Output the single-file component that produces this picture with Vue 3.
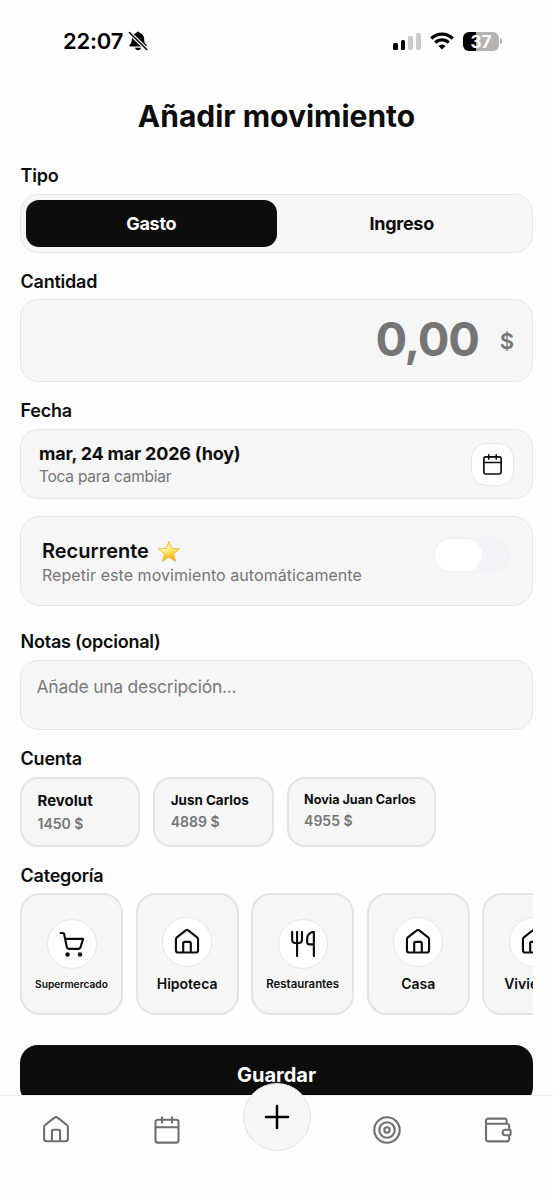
<script setup>
import { ref } from 'vue'

const tipo = ref('Gasto')
const tipos = ['Gasto', 'Ingreso']
const cuentas = [
  { nombre: 'Revolut', saldo: '1450 $', size: 'lg' },
  { nombre: 'Jusn Carlos', saldo: '4889 $', size: 'md' },
  { nombre: 'Novia Juan Carlos', saldo: '4955 $', size: 'sm' },
]
const categorias = [
  { nombre: 'Supermercado', icon: 'cart', size: 'xs' },
  { nombre: 'Hipoteca', icon: 'home', size: 'lg' },
  { nombre: 'Restaurantes', icon: 'food', size: 'sm' },
  { nombre: 'Casa', icon: 'home', size: 'lg' },
  { nombre: 'Vivienda', icon: 'home', size: 'lg' },
]
const HOME =
  'M4.600 25.300H23.400a2.500 2.500 0 0 0 2.500-2.500V11a2.500 2.500 0 0 0-.95-1.950L15.600 1.700a2.500 2.500 0 0 0-3.200 0L3.050 9.050A2.500 2.500 0 0 0 2.100 11V22.800A2.500 2.500 0 0 0 4.600 25.300ZM9.900 25V15.400A1.600 1.600 0 0 1 11.500 13.800h5a1.600 1.600 0 0 1 1.600 1.600V25'
const CALENDAR =
  'M4.700 3.800h18.600a2.200 2.200 0 0 1 2.200 2.200v18.400a2.200 2.200 0 0 1-2.200 2.200H4.700a2.200 2.200 0 0 1-2.200-2.200V6a2.200 2.200 0 0 1 2.200-2.200ZM2.500 11.300h23M9 1.200v5.600M19 1.200v5.600'
const icons = {
  home: HOME,
  cart: 'M1.800 2.200h2.300a1.400 1.400 0 0 1 1.400 1.100L8.500 17.600a2.200 2.200 0 0 0 2.100 1.700h10.400a2.200 2.200 0 0 0 2.100-1.700L26 8.500H6.700',
  food: 'M2.300 1v8.700a3.200 3.200 0 0 0 3.200 3.200h4.200a3.200 3.200 0 0 0 3.200-3.200V1M7.600 1V27M25.700 14.400h-5a2.200 2.200 0 0 1-2.200-2.200V8.200c0-3.800 2.800-7.200 7.200-7.200V27',
}
</script>

<template>
  <div class="screen">
    <div class="scroll">
      <header class="status">
        <div class="clock">
          <span>22:07</span>
          <svg width="20" height="20" viewBox="0 0 20 20">
            <path d="M10 .8c.9 0 1.500.5 1.700 1.200 2.800.7 4.400 2.800 4.400 5.600 0 3.500.8 4.900 2.200 6.100.7.700.5 1.700-.6 1.700H2.300c-1.100 0-1.300-1-.6-1.700 1.400-1.200 2.200-2.600 2.200-6.100 0-2.800 1.600-4.900 4.400-5.600C8.500 1.300 9.100.8 10 .8ZM7 16.800h6c-.3 1.500-1.400 2.500-3 2.500s-2.700-1-3-2.500Z" fill="#000" />
            <path d="M1 1.200 19 18.800" stroke="#fefefe" stroke-width="3.800" />
            <path d="M1.400 1.500 18.700 18.500" stroke="#000" stroke-width="1.500" stroke-linecap="round" />
          </svg>
        </div>
        <div class="signals">
          <div class="bars"><i class="b1" /><i class="b2" /><i class="b3" /><i class="b4" /></div>
          <svg class="wifi" width="24" height="18" viewBox="0 0 24 18">
            <g fill="none" stroke="#000" stroke-width="3.200">
              <path d="M1.300 6.500a15.200 15.200 0 0 1 21.400 0" />
              <path d="M5.300 10.700a9.500 9.500 0 0 1 13.400 0" />
            </g>
            <path d="M12 17.600 8.300 13.900a5.300 5.300 0 0 1 7.400 0Z" fill="#000" />
          </svg>
          <div class="battery"><span>37</span></div>
          <div class="nub" />
        </div>
      </header>

      <h1>Añadir movimiento</h1>

      <main>
        <h2>Tipo</h2>
        <div class="box segment">
          <button v-for="t in tipos" :key="t" :class="{ on: t === tipo }" @click="tipo = t">{{ t }}</button>
        </div>

        <h2 class="short">Cantidad</h2>
        <div class="box amount"><span class="num">0,00</span><span class="cur">$</span></div>

        <h2>Fecha</h2>
        <div class="box date">
          <div>
            <div class="date-main">mar, 24 mar 2026 (hoy)</div>
            <div class="date-sub">Toca para cambiar</div>
          </div>
          <div class="date-btn">
            <svg width="21" height="21" viewBox="0 0 28 28" class="ico thick"><path :d="CALENDAR" /></svg>
          </div>
        </div>

        <div class="box recur">
          <div>
            <div class="recur-main">
              <span>Recurrente</span>
              <svg width="24" height="23" viewBox="0 0 24 23">
                <defs>
                  <linearGradient id="star" x1="0" y1="0" x2="0.300" y2="1">
                    <stop offset="0" stop-color="#fbd85a" />
                    <stop offset="0.450" stop-color="#fdf3a0" />
                    <stop offset="0.650" stop-color="#fbdc55" />
                    <stop offset="1" stop-color="#f3ab1c" />
                  </linearGradient>
                </defs>
                <path d="M12 1.200 14.900 8.300 22.600 8.900 16.700 13.800 18.600 21.300 12 17.200 5.400 21.300 7.300 13.800 1.400 8.900 9.100 8.300Z" fill="url(#star)" stroke="#efb73c" stroke-width="0.900" stroke-linejoin="round" />
              </svg>
            </div>
            <div class="recur-sub">Repetir este movimiento automáticamente</div>
          </div>
          <div class="toggle"><i /></div>
        </div>

        <h2 class="tall">Notas (opcional)</h2>
        <div class="box notes">Añade una descripción...</div>

        <h2>Cuenta</h2>
        <div class="accounts">
          <div v-for="c in cuentas" :key="c.nombre" class="account" :class="c.size">
            <div class="acc-name">{{ c.nombre }}</div>
            <div class="acc-bal">{{ c.saldo }}</div>
          </div>
        </div>

        <h2 class="short cat-title">Categoría</h2>
        <div class="cats">
          <div v-for="c in categorias" :key="c.nombre" class="cat" :class="c.size">
            <div class="circle">
              <svg width="26" height="26" viewBox="0 0 28 28" class="ico dark">
                <path :d="icons[c.icon]" />
                <g v-if="c.icon === 'cart'" class="wheels">
                  <circle cx="9.200" cy="25.200" r="2.400" /><circle cx="22.600" cy="25.200" r="2.400" />
                </g>
              </svg>
            </div>
            <div class="cat-name">{{ c.nombre }}</div>
          </div>
        </div>

        <button class="save">Guardar</button>
      </main>
    </div>

    <nav>
      <div class="tab"><svg width="28" height="28" viewBox="0 0 28 28" class="ico"><path :d="HOME" /></svg></div>
      <div class="tab"><svg width="28" height="28" viewBox="0 0 28 28" class="ico"><path :d="CALENDAR" /></svg></div>
      <div class="tab">
        <div class="fab">
          <svg width="26" height="26" viewBox="0 0 26 26"><path d="M13 2v22M2 13h22" stroke="#000" stroke-width="2.500" stroke-linecap="round" /></svg>
        </div>
      </div>
      <div class="tab">
        <svg width="28" height="28" viewBox="0 0 28 28" class="ico">
          <circle cx="14" cy="14" r="12.700" /><circle cx="14" cy="14" r="7.700" /><circle cx="14" cy="14" r="2.700" />
        </svg>
      </div>
      <div class="tab">
        <svg width="28" height="28" viewBox="0 0 28 28" class="ico">
          <path d="M22.600 7.800V4.300a1.700 1.700 0 0 0-1.700-1.700H4.200A2.200 2.200 0 0 0 2 4.800V23.200a2.200 2.200 0 0 0 2.200 2.200H23a2.200 2.200 0 0 0 2.200-2.200v-4M25.200 13.800V9.900A2.100 2.100 0 0 0 23.100 7.800H2M21.300 13.800h4.300a1 1 0 0 1 1 1v3.400a1 1 0 0 1-1 1h-4.300a2.700 2.700 0 0 1 0-5.400Z" />
        </svg>
      </div>
    </nav>
  </div>
</template>

<style>
body {
  background: #fff;
}
</style>

<style scoped>
.screen {
  width: 553px;
  height: 1200px;
  overflow: hidden;
  display: flex;
  flex-direction: column;
  background: #fefefe;
  color: #0d0d0d;
  font-family: Inter, 'Liberation Sans', sans-serif;
}
.screen * {
  box-sizing: border-box;
}
button {
  font-family: inherit;
  border: 0;
  padding: 0;
  color: inherit;
}
.scroll {
  height: 1095px;
  flex: none;
  overflow: hidden;
}
.status {
  height: 82px;
  padding: 0 51px 0 63px;
  display: flex;
  align-items: center;
  justify-content: space-between;
}
.clock {
  display: flex;
  align-items: center;
  gap: 5px;
  font-size: 22px;
  font-weight: 600;
  letter-spacing: -0.2px;
  color: #000;
}
.signals {
  display: flex;
  align-items: center;
}
.bars {
  display: flex;
  align-items: flex-end;
  gap: 3px;
  height: 17px;
  margin-right: 9px;
}
.bars i {
  width: 4.800px;
  border-radius: 1.500px;
  background: #000;
}
.bars .b1 { height: 7px; }
.bars .b2 { height: 10px; }
.bars .b3 { height: 13.500px; background: #ccc; }
.bars .b4 { height: 17px; background: #ccc; }
.battery {
  margin-left: 9px;
  width: 36px;
  height: 19px;
  border-radius: 6px;
  background: linear-gradient(90deg, #000 37%, #b3b3b3 37%);
  color: #fff;
  font-size: 17px;
  font-weight: 700;
  line-height: 20px;
  text-align: center;
}
.nub {
  width: 2px;
  height: 6px;
  margin-left: 1px;
  border-radius: 0 2px 2px 0;
  background: #b3b3b3;
}
h1 {
  margin: 0;
  height: 70px;
  line-height: 69px;
  text-align: center;
  font-size: 30px;
  font-weight: 700;
}
main {
  padding: 0 20px;
}
h2 {
  margin: 0;
  height: 47px;
  padding: 17px 0 0 0.600px;
  font-size: 18px;
  line-height: 24px;
  letter-spacing: -0.24px;
  font-weight: 600;
}
h1 + main > h2:first-child {
  height: 42px;
  padding-top: 12px;
}
h2.tall {
  height: 54px;
  padding-top: 24px;
}
h2.short {
  height: 46px;
}
.box {
  border: 1.500px solid #e6e6e6;
  border-radius: 18px;
  background: #f6f6f6;
}
.segment {
  height: 59px;
  padding: 5px;
  display: flex;
}
.segment button {
  flex: 1;
  border-radius: 13px;
  background: transparent;
  font-size: 18px;
  font-weight: 700;
  letter-spacing: -0.3px;
}
.segment .on {
  background: #0d0d0d;
  color: #fff;
}
.amount {
  height: 83px;
  padding: 0 18px;
  display: flex;
  align-items: center;
  justify-content: flex-end;
  gap: 21px;
  color: #757575;
  font-weight: 700;
}
.num { font-size: 47px; letter-spacing: -1.200px; padding-bottom: 5px; }
.cur { font-size: 22px; font-weight: 600; }
.date {
  height: 70px;
  padding: 0 18px;
  display: flex;
  align-items: center;
  justify-content: space-between;
}
.date-main {
  font-size: 18px;
  line-height: 24px;
  letter-spacing: -0.220px;
  font-weight: 700;
}
.date-sub {
  font-size: 15.500px;
  line-height: 21px;
  letter-spacing: -0.240px;
  color: #757575;
}
.date-btn {
  width: 43px;
  height: 43px;
  border: 1px solid #e6e6e6;
  border-radius: 15px;
  background: #fff;
  display: flex;
  align-items: center;
  justify-content: center;
}
.ico {
  fill: none;
  stroke: #6f6f6f;
  stroke-width: 2.100;
  stroke-linecap: round;
  stroke-linejoin: round;
}
.ico.dark { stroke: #0d0d0d; stroke-width: 2.300; }
.ico.thick { stroke: #0d0d0d; stroke-width: 2.200; }
.wheels { fill: #0d0d0d; stroke: none; }
.recur {
  height: 90px;
  margin-top: 17px;
  padding: 0 21px;
  display: flex;
  justify-content: space-between;
  border-radius: 20px;
}
.recur-main {
  margin-top: 21px;
  height: 26px;
  display: flex;
  align-items: center;
  gap: 8px;
  font-size: 20px;
  font-weight: 600;
}
.recur-sub {
  font-size: 16px;
  line-height: 23px;
  letter-spacing: 0.060px;
  color: #757575;
}
.toggle {
  width: 78px;
  height: 36px;
  margin-top: 20px;
  padding: 2px;
  border-radius: 18px;
  background: #f2f2f7;
}
.toggle i {
  display: block;
  width: 47px;
  height: 32px;
  border-radius: 16px;
  background: #fff;
}
.notes {
  height: 70px;
  padding: 14px 15.500px;
  font-size: 17.500px;
  letter-spacing: -0.240px;
  line-height: 24px;
  color: #7a7a7a;
}
.accounts {
  display: flex;
  gap: 13px;
}
.account {
  min-width: 120.300px;
  height: 70px;
  padding: 11px 15px 0 15.500px;
  border: 2px solid #e4e4e4;
  border-radius: 18px;
  background: #f6f6f6;
  white-space: nowrap;
}
.account:last-child { width: 149.500px; }
.acc-name { font-weight: 700; }
.acc-bal { font-weight: 600; font-size: 14px; line-height: 20px; margin-top: 2px; color: #757575; }
.lg .acc-name { font-size: 15px; line-height: 22px; }
.md .acc-name { font-size: 13.400px; line-height: 20px; }
.sm .acc-name { font-size: 12.600px; line-height: 20px; }
.account.sm .acc-bal { margin-top: 1px; }
.cats {
  display: flex;
  gap: 12.600px;
  overflow: hidden;
}
.cat {
  flex: none;
  width: 103px;
  height: 122px;
  padding-top: 2px;
  border: 2px solid #e4e4e4;
  border-radius: 20px;
  background: #f6f6f6;
  display: flex;
  flex-direction: column;
  align-items: center;
  justify-content: center;
  gap: 7px;
}
.circle {
  width: 50px;
  height: 50px;
  border: 1px solid #e6e6e6;
  border-radius: 50%;
  background: #fff;
  display: flex;
  align-items: center;
  justify-content: center;
}
.cat-name { font-weight: 600; font-size: 14px; line-height: 20px; }
.xs .cat-name { font-size: 10.200px; line-height: 16px; }
.cat.sm .cat-name { font-size: 11.400px; line-height: 16px; }
.save {
  display: block;
  width: 100%;
  height: 60px;
  margin-top: 30px;
  border-radius: 18px;
  background: #0d0d0d;
  color: #fff;
  font-size: 20px;
  font-weight: 700;
}
nav {
  height: 105px;
  flex: none;
  padding-left: 1px;
  border-top: 1px solid #f0f0f0;
  background: #fefefe;
  display: flex;
}
.tab {
  flex: 1;
  height: 68px;
  display: flex;
  align-items: center;
  justify-content: center;
}
.fab {
  flex: none;
  width: 68px;
  height: 68px;
  margin-top: -26px;
  border: 1px solid #e3e3e3;
  border-radius: 50%;
  background: #f6f6f6;
  display: flex;
  align-items: center;
  justify-content: center;
}
</style>
